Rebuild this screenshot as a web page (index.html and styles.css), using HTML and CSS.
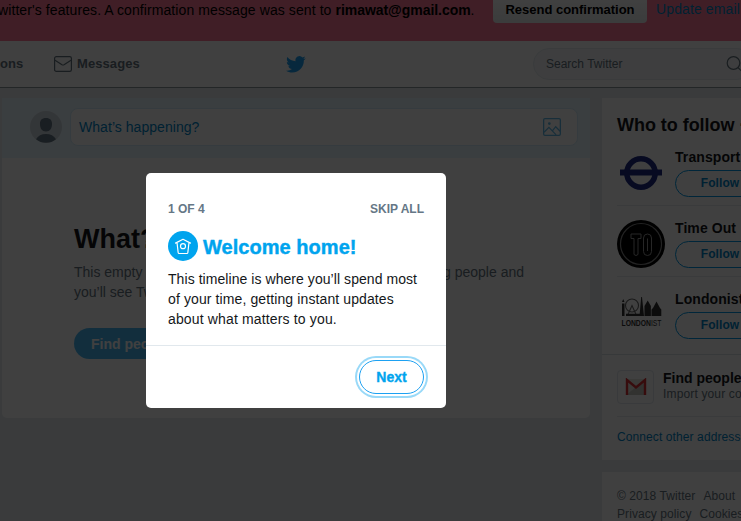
FILE: index.html
```
<!DOCTYPE html>
<html lang="en">
<head>
<meta charset="utf-8">
<title>Twitter</title>
<link rel="stylesheet" href="styles.css">
</head>
<body>
<div class="page">
  <div class="banner">
    <span class="banner-text">witter's features. A confirmation message was sent to <b>rimawat@gmail.com</b>.</span>
    <button class="resend">Resend confirmation</button>
    <a class="update">Update email</a>
  </div>
  <nav class="topbar">
    <span class="nav-cut">ons</span>
    <svg class="mail" viewBox="0 0 18 16"><rect x=".6" y=".6" width="16.8" height="14.8" rx="1.7"/><path d="M1 4.2 8 8.7q1 .6 2 0l7-4.5"/></svg>
    <span class="nav-messages">Messages</span>
    <svg class="bird" viewBox="0 0 24 20"><path d="M23.6 2.4c-.9.4-1.8.6-2.8.8 1-.6 1.8-1.5 2.1-2.7-.9.6-2 1-3.1 1.2a4.8 4.8 0 0 0-8.3 4.4C7.500 5.900 4 4 1.700 1.100c-1.300 2.200-.6 5 1.500 6.500-.8 0-1.500-.2-2.200-.6 0 2.300 1.600 4.400 3.900 4.900-.7.2-1.500.2-2.200.1.600 1.900 2.400 3.300 4.500 3.400A9.800 9.800 0 0 1 0 17.400c2.200 1.400 4.800 2.200 7.500 2.200 9 0 14.200-7.600 13.900-14.700 1-.6 1.700-1.500 2.200-2.500z"/></svg>
    <div class="search"><span>Search Twitter</span><svg viewBox="0 0 16 16"><circle cx="7.500" cy="7" r="6.300"/><path d="m12 11.500 4 4"/></svg></div>
  </nav>
  <div class="content">
    <main class="timeline">
      <div class="compose">
        <svg class="avatar" viewBox="0 0 32 32"><circle class="av-bg" cx="16" cy="16" r="16"/><path d="M16 7c4.500 0 6.200 2.500 6 6.500-.2 4-1.900 7-6 7s-5.800-3-6-7C9.800 9.500 11.500 7 16 7zM6 28.300c2-3.700 5.500-5.400 10-5.400s8 1.700 10 5.400a16 16 0 0 1-20 0z"/></svg>
        <div class="tweet-box"><span>What’s happening?</span><svg viewBox="0 0 17 17"><rect x=".6" y=".6" width="15.800" height="15.800" rx="1.200"/><path d="m1 13.500 4.600-4.600 6.800 7M9 12l3-3.800 4.400 4.500"/><circle cx="6" cy="5.200" r=".7"/></svg></div>
      </div>
      <section class="empty">
        <h1>What?</h1>
        <div class="empty-copy"><p>This empty</p><p>g people and</p></div>
        <p class="second">you’ll see Tw</p>
        <button class="find">Find peo</button>
      </section>
    </main>
    <aside class="sidebar">
      <section class="card">
        <h2>Who to follow <span>·</span></h2>
        <div class="account first">
          <svg viewBox="0 0 48 48"><circle class="tfl-ring" cx="24" cy="24" r="14.200"/><path class="tfl-bar" d="M3 20.500h42v6H3z"/></svg>
          <div><b>Transport</b><button class="follow">Follow</button></div>
        </div>
        <div class="account">
          <svg viewBox="0 0 48 48"><circle cx="24" cy="24" r="24"/><circle class="to-ring" cx="24" cy="24" r="20.500"/><g class="to-letter"><path d="M14 14h10v4.500h-3v16q-2 2-4 0v-16h-3z"/><rect x="26.500" y="14" width="8" height="21.500" rx="4"/><path d="M30.500 18.500v12.500"/></g></svg>
          <div><b>Time Out</b><button class="follow">Follow</button></div>
        </div>
        <div class="account last">
          <svg viewBox="0 0 48 48"><g class="skyline"><circle class="wheel" cx="15" cy="14.500" r="6.500"/><path class="wheel" d="m10.500 24.500 4.500-10 4.500 10"/><path d="M5 12.500h2.500v12.500H5zM6.200 8 7.500 11H5zM22.500 25l1.700-19H25l2 19zM27.500 25v-10l3.200-5.500 3.200 5.500v10zM34.500 25v-6.500l1.500-1.500 3.500-6.500 3.500 6.500 1.300 1.500V25zM9 22.800h14V25H9z"/><text x="4.500" y="35" textLength="40" lengthAdjust="spacingAndGlyphs">LONDON<tspan class="ist">IST</tspan></text></g></svg>
          <div><b>Londonist</b><button class="follow">Follow</button></div>
        </div>
        <div class="import">
          <div class="gmail"><svg viewBox="0 0 22 18"><path class="paper" d="M1 1h20v16H1z"/><path class="fold" d="m11 9 10-7v15h-3zM1 17l10-8 10 8z"/><path class="red" d="M2 17V2l9 7.500L20 2v15"/></svg></div>
          <div class="import-copy"><b>Find people</b><span>Import your co</span></div>
        </div>
        <a class="connect">Connect other address</a>
      </section>
      <footer class="card footer">
        <p><span>© 2018 Twitter</span><span>About</span></p>
        <p><span>Privacy policy</span><span>Cookies</span></p>
      </footer>
    </aside>
  </div>
</div>
<div class="overlay">
  <div class="dialog" role="dialog">
    <div class="dialog-body">
      <div class="steps"><span class="count">1 OF 4</span><span class="skip">SKIP ALL</span></div>
      <div class="title">
        <svg viewBox="0 0 30 30"><circle class="home-bg" cx="15" cy="15" r="15"/><path d="m7.500 12.100 7.500-3.800 7.500 3.800M9 11.500l1.200 10.200q.1.800.9.800h7.800q.8 0 .9-.8L21 11.500"/><circle cx="15" cy="15.200" r="2.500"/></svg>
        <h3>Welcome home!</h3>
      </div>
      <p class="l1">This timeline is where you’ll spend most</p>
      <p class="l2">of your time, getting instant updates</p>
      <p class="l3">about what matters to you.</p>
    </div>
    <div class="dialog-foot"><button class="next">Next</button></div>
  </div>
</div>
</body>
</html>
```
FILE: styles.css
```
* { box-sizing: border-box; }
html, body { margin: 0; width: 741px; height: 521px; overflow: hidden; }
body { font: 14px/20px "Liberation Sans", Arial, sans-serif; color: #14171a; background: #e6ecf0; }
p, h1, h2, h3 { margin: 0; }
button { font: inherit; margin: 0; padding: 0; white-space: nowrap; flex: none; }
svg { display: block; flex: none; fill: none; }
.page { width: 741px; height: 521px; overflow: hidden; white-space: nowrap; }

.banner { height: 41px; background: #ff7a96; display: flex; align-items: flex-start; color: #000; }
.banner-text { width: 495px; margin-left: -2px; flex: none; font-size: 14px; letter-spacing: .09px; }
.banner-text b { letter-spacing: -.04px; }
.resend { width: 154px; height: 23px; border: 0; border-radius: 0 0 4px 4px; background: linear-gradient(#fff, #e9eeee); font-weight: bold; font-size: 13px; line-height: 18px; padding-bottom: 4px; letter-spacing: -.01px; color: #000; }
.update { margin-left: 9px; color: #0084c8; letter-spacing: .12px; line-height: 19px; }

.topbar { height: 47px; background: #fff; border-bottom: 1px solid #8c969d; display: flex; align-items: center; color: #66757f; font-weight: bold; font-size: 13px; }
.nav-cut { width: 54px; flex: none; }
.mail { width: 18px; height: 16px; stroke: #66757f; stroke-width: 1.2; }
.nav-messages { margin-left: 5px; width: 209px; flex: none; letter-spacing: .08px; }
.bird { width: 20px; height: 17px; fill: #1da1f2; }
.search { margin-left: 227px; width: 220px; height: 32px; flex: none; border: 1px solid #e6ecf0; border-radius: 16px; background: #f5f8fa; display: flex; align-items: center; padding-left: 12px; font-weight: normal; font-size: 12px; }
.search span { width: 180px; }
.search svg { width: 16px; height: 16px; stroke: #66757f; stroke-width: 1.2; }

.content { display: flex; padding: 10px 0 0 2px; gap: 12px; align-items: flex-start; }
.timeline { width: 588px; flex: none; }
.compose { height: 60px; background: #e8f5fd; display: flex; align-items: flex-start; padding: 10px 12px 0 28px; gap: 8px; }
.avatar { width: 32px; height: 32px; margin-top: 3px; fill: #657786; }
.av-bg { fill: #ccd6dd; }
.tweet-box { width: 508px; height: 38px; border: 1px solid #d2ecfc; border-radius: 8px; background: #fff; display: flex; align-items: center; justify-content: space-between; padding: 0 16px 0 8px; color: #0084c8; letter-spacing: .05px; }
.tweet-box svg { width: 18px; height: 18px; stroke: #60b8e5; stroke-width: 1.2; }
.empty { height: 260px; background: #fff; border-radius: 0 0 5px 5px; padding: 64px 0 0 72px; color: #66757f; overflow: hidden; }
.empty h1 { color: #14171a; font-size: 27px; line-height: 34px; margin-bottom: 6px; }
.empty-copy { display: flex; width: 450px; justify-content: space-between; }
.find { display: block; margin-top: 26px; width: 180px; height: 31px; padding-left: 17px; text-align: left; border: 0; border-radius: 16px; background: #4ab9f4; color: #fff; font-weight: bold; }

.sidebar { width: 290px; flex: none; }
.card { background: #fff; padding: 15px 15px 0; height: 362px; overflow: hidden; margin-bottom: 12px; }
.card h2 { font-size: 18px; line-height: 24px; letter-spacing: -.04px; margin-bottom: 9px; }
.account { height: 71px; display: flex; gap: 10px; padding-top: 11px; border-bottom: 1px solid #e6ecf0; }
.account svg { width: 48px; height: 48px; margin-top: 3px; fill: #000; }
.account b { display: block; line-height: 22px; height: 24px; letter-spacing: .08px; }
.account .tfl-ring { fill: #fff; stroke: #1c2b82; stroke-width: 5.5; }
.account .tfl-bar { fill: #1c2b82; }
.account .to-ring { fill: none; stroke: #888; stroke-width: 1.2; }
.to-letter { fill: none; stroke: #999; stroke-width: 1; }
.skyline { fill: #333; }
.skyline .wheel { fill: none; stroke: #666; stroke-width: 1.1; }
.skyline text { font: bold 9px "Liberation Sans", Arial, sans-serif; }
.skyline .ist { font-weight: normal; }
.follow { width: 90px; height: 27px; border: 1px solid #0099e6; border-radius: 14px; background: transparent; color: #0084c8; font-weight: bold; font-size: 12px; line-height: 25px; letter-spacing: .1px; }
.account.first { height: 60px; padding-top: 0; }
.account.last { height: 77px; border: 0; }
.import { margin: 0 -15px; padding: 15px 15px 0; height: 62px; border-top: 1px solid #dce4e8; display: flex; gap: 9px; }
.gmail { width: 37px; height: 34px; border: 1px solid #e1e8ed; border-radius: 4px; display: flex; align-items: center; justify-content: center; }
.gmail svg { width: 22px; height: 18px; }
.paper { fill: #e8e8e0; }
.fold { fill: #c8c8c0; }
.red { stroke: #db3236; stroke-width: 2.4; }
.import-copy { line-height: 16px; }
.import-copy b, .import-copy span { display: block; }
.import-copy span { font-size: 12px; color: #66757f; line-height: 16px; letter-spacing: .15px; }
.connect { display: block; border-top: 1px solid #e6ecf0; font-size: 12px; color: #0084c8; line-height: 20px; padding-top: 10px; letter-spacing: .1px; }
.footer { height: 100px; font-size: 12px; line-height: 18px; color: #66757f; letter-spacing: .08px; }
.footer p { display: flex; gap: 8px; }

.overlay { position: fixed; inset: 0; background: rgba(0, 0, 0, .75); padding: 173px 0 0 146px; }
.dialog { width: 300px; height: 235px; background: #fff; border-radius: 5px; white-space: nowrap; }
.dialog-body { height: 173px; padding: 26px 22px 0; border-bottom: 1px solid #e1e8ed; }
.steps { display: flex; justify-content: space-between; font-size: 12px; font-weight: bold; color: #657786; }
.title { display: flex; align-items: center; gap: 5px; height: 30px; margin: 12px 0 8px; }
.title svg { width: 30px; height: 30px; stroke: #fff; stroke-width: 1.2; stroke-linejoin: round; stroke-linecap: round; }
.title .home-bg { fill: #00a4ee; stroke: none; }
.title h3 { color: #00a4ee; font-size: 20px; line-height: 28px; padding-top: 2px; letter-spacing: .04px; -webkit-text-stroke: .4px #00a4ee; }
.l1 { letter-spacing: .06px; }
.l2 { letter-spacing: .11px; }
.l3 { letter-spacing: .15px; }
.dialog-foot { padding: 14px 22px; display: flex; justify-content: flex-end; }
.next { width: 65px; height: 34px; border: 1px solid #1da1f2; border-radius: 17px; background: #fff; color: #00a4ee; font-weight: bold; box-shadow: 0 0 0 2px #fff, 0 0 0 4px #99d9f8; -webkit-text-stroke: .35px #00a4ee; }
```
